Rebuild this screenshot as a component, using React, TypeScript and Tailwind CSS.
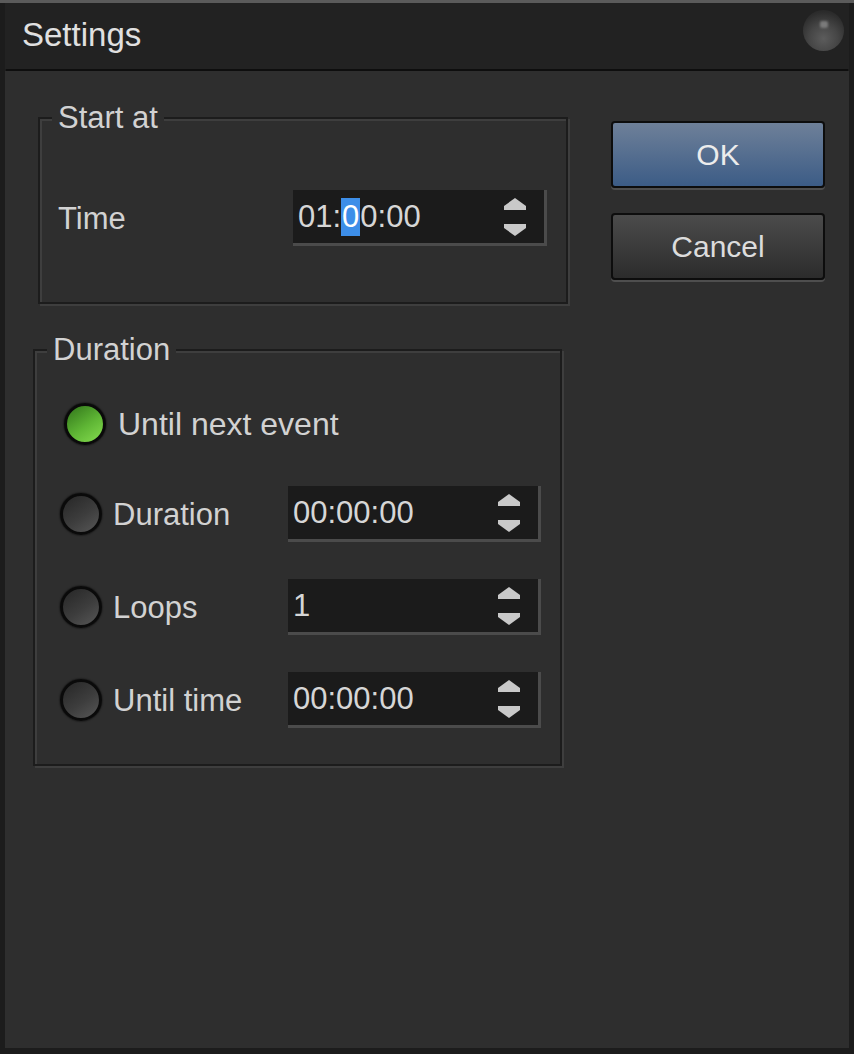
function SpinArrows() {
  return (
    <svg width="24" height="38" viewBox="0 0 24 38" className="shrink-0">
      <polygon points="12,0 23,8 23,12 1,12 1,8" fill="#c9c9c9" />
      <polygon points="1,26 23,26 23,30 12,38 1,30" fill="#c9c9c9" />
    </svg>
  )
}

function TimeInput({ value, selected }: { value: string; selected?: boolean }) {
  return (
    <div className="h-[56px] w-full bg-[#1b1b1b] border-r-[3px] border-b-[3px] border-[#4b4b4b] flex items-center justify-between pl-[5px] pr-[17px]">
      <span className="text-[31px] leading-none text-[#d6d6d6] whitespace-pre">
        {selected ? (
          <>
            {value.slice(0, 3)}
            <span className="inline-block leading-[38px] bg-[#3d8ee8] text-white px-[1px]">{value.slice(3, 4)}</span>
            {value.slice(4)}
          </>
        ) : (
          value
        )}
      </span>
      <SpinArrows />
    </div>
  )
}

function Radio({ checked }: { checked?: boolean }) {
  return (
    <div
      className={
        checked
          ? 'w-[42px] h-[42px] shrink-0 rounded-full border-[3px] border-[#0a0a0a] shadow-[0_0_2px_#000] bg-[linear-gradient(145deg,#30741a,#5fb635_55%,#86dc50)]'
          : 'w-[42px] h-[42px] shrink-0 rounded-full border-[3px] border-[#0a0a0a] shadow-[0_0_2px_#000] bg-[linear-gradient(145deg,#262626,#3d3d3d_55%,#575757)]'
      }
    />
  )
}

export default function App() {
  return (
    <div className="w-[854px] h-[1054px] flex flex-col bg-[#1c1c1c] border-t-[3px] border-[#5b5b5b] px-[5px] pb-[6px] font-['Liberation_Sans',Arial,sans-serif] text-[#d2d2d2]">
      {/* title bar */}
      <div className="h-[66px] shrink-0 bg-[#222222] flex items-start justify-between pl-[17px] pr-[5px]">
        <div className="mt-[12px] text-[33px] leading-[40px] text-[#e0e0e0]">Settings</div>
        <div className="mt-[7px] w-[41px] h-[41px] rounded-full flex justify-center bg-[radial-gradient(circle_at_50%_70%,#5c5c5c_0%,#464646_40%,#2c2c2c_75%,#222222_100%)]">
          <div className="mt-[11px] w-[8px] h-[7px] rounded-[2px] bg-[#7a7a7a] blur-[1px]" />
        </div>
      </div>
      <div className="h-[2px] shrink-0 bg-[#0e0e0e] mx-[1px]" />

      {/* body */}
      <div className="flex-1 bg-[#2e2e2e] flex">
        <div className="w-[563px] pl-[28px] flex flex-col">
          {/* Start at */}
          <fieldset className="mt-[29px] ml-[5px] w-[530px] border-2 border-[#1c1c1c] shadow-[inset_2px_2px_0_#3e3e3e,2px_2px_0_#3e3e3e]">
            <legend className="ml-[12px] px-[6px] bg-[#2e2e2e] text-[31px] leading-[36px]">Start at</legend>
            <div className="flex items-center justify-between pl-[18px] pr-[19px] pt-[54px] pb-[56px]">
              <span className="text-[31px] leading-none">Time</span>
              <div className="w-[254px]">
                <TimeInput value="01:00:00" selected />
              </div>
            </div>
          </fieldset>

          {/* Duration */}
          <fieldset className="mt-[28px] w-[529px] border-2 border-[#1c1c1c] shadow-[inset_2px_2px_0_#3e3e3e,2px_2px_0_#3e3e3e]">
            <legend className="ml-[12px] px-[6px] bg-[#2e2e2e] text-[31px] leading-[36px]">Duration</legend>
            <div className="flex flex-col pt-[28px] pb-[36px]">
              <div className="h-[56px] flex items-center pl-[29px] gap-[12px]">
                <Radio checked />
                <span className="text-[32px] leading-none">Until next event</span>
              </div>
              {[
                { label: 'Duration', value: '00:00:00', mt: 'mt-[34px]' },
                { label: 'Loops', value: '1', mt: 'mt-[37px]' },
                { label: 'Until time', value: '00:00:00', mt: 'mt-[37px]' },
              ].map((row) => (
                <div key={row.label} className={'h-[56px] flex items-center pl-[25px] ' + row.mt}>
                  <div className="w-[228px] flex items-center gap-[11px]">
                    <Radio />
                    <span className="text-[31px] leading-none">{row.label}</span>
                  </div>
                  <div className="w-[253px]">
                    <TimeInput value={row.value} />
                  </div>
                </div>
              ))}
            </div>
          </fieldset>
        </div>

        {/* buttons */}
        <div className="ml-[43px] mt-[50px] flex flex-col gap-[25px]">
          <button className="w-[214px] h-[67px] rounded-[4px] border-2 border-[#0d0d0d] shadow-[0_2px_0_#4e4e4e] bg-[linear-gradient(to_bottom,#6e8099,#3c5c86)] text-[30px] text-[#ececec]">
            OK
          </button>
          <button className="w-[214px] h-[67px] rounded-[4px] border-2 border-[#0d0d0d] shadow-[0_2px_0_#4e4e4e] bg-[linear-gradient(to_bottom,#4b4b4b,#2c2c2c)] text-[30px] text-[#dcdcdc]">
            Cancel
          </button>
        </div>
      </div>
    </div>
  )
}
